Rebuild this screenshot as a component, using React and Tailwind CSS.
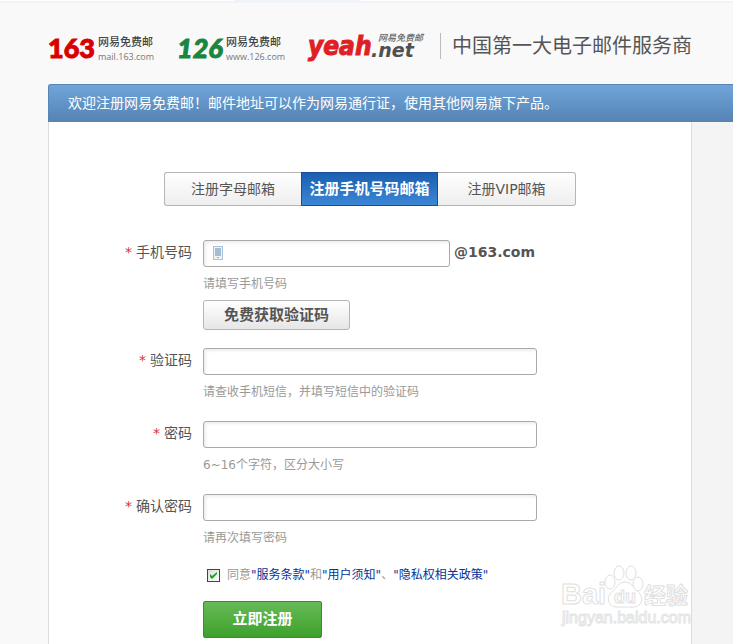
import { useState } from "react";

const TABS = [
  { id: "letter", label: "注册字母邮箱" },
  { id: "mobile", label: "注册手机号码邮箱" },
  { id: "vip", label: "注册VIP邮箱" },
];

const INPUT =
  "h-[27px] rounded-[3px] border border-[#a9a9a9] bg-white px-2 text-sm shadow-[inset_2px_2px_3px_#eeeeee] outline-none";

function Field({ id, label, hint, children }) {
  return (
    <div className="flex gap-[11px]">
      <label htmlFor={id} className="w-[143px] text-right text-sm leading-6">
        <span className="mr-1 text-[#d9333a]">*</span>
        {label}
      </label>
      <div>
        {children}
        <p className="mt-2 text-xs leading-[18px] text-[#999999]">{hint}</p>
      </div>
    </div>
  );
}

function PhoneIcon() {
  return (
    <svg viewBox="0 0 10 14" className="absolute top-[6px] left-[10px] h-[14px] w-[10px]">
      <rect x="0.5" y="0.5" width="9" height="13" fill="#f1f1f1" stroke="#a9c4dc" />
      <rect x="2" y="2" width="6" height="8" fill="#a3bdd6" />
      <rect x="4" y="11" width="2" height="1" fill="#a3a9ae" />
    </svg>
  );
}

function Watermark() {
  return (
    <svg
      viewBox="-3 0 134 72"
      className="pointer-events-none absolute right-0 bottom-3 h-[72px] w-[134px]"
      fill="#ffffff"
      stroke="#dfdfdf"
      aria-hidden="true"
    >
      <g fontFamily="Liberation Sans, sans-serif">
        <text x="1" y="44" fontSize="29" fontWeight="700">Bai</text>
        <text x="84" y="43" fontSize="22" fontWeight="700" fontFamily="Noto Sans CJK SC, sans-serif">经验</text>
        <text x="2" y="63" fontSize="16" stroke="#e4e4e4">jingyan.baidu.com</text>
      </g>
      <ellipse cx="50" cy="22" rx="5" ry="7" />
      <ellipse cx="59" cy="13" rx="5" ry="7" />
      <ellipse cx="71" cy="13" rx="5" ry="7" />
      <ellipse cx="78" cy="24" rx="5" ry="7" />
      <path d="M65 22c6 0 8 5 12 9 5 4 6 9 3 13-3 4-8 3-15 3s-12 1-15-3c-3-4-2-9 3-13 4-4 6-9 12-9z" />
      <text x="54" y="43" fontSize="18" fontWeight="700" fontFamily="Liberation Sans, sans-serif">du</text>
    </svg>
  );
}

function Caption({ site }) {
  return (
    <span className="pt-[2px] text-[11px] leading-4 font-medium text-[#444444]">
      <span className="block">网易免费邮</span>
      <span className="block font-['Open_Sans'] text-[9px] leading-3 text-[#777777]">{site}</span>
    </span>
  );
}

function Header() {
  return (
    <header className="flex h-[83px] border-t-2 border-[#f0f4f8] pt-[30px] pl-12 whitespace-nowrap">
      <a href="#163" className="flex w-[129px] gap-[3px]">
        <span className="w-[47px] font-['Lato'] text-[27px] leading-[30px] font-black text-[#d90000] [-webkit-text-stroke:1px_#d90000]">
          163
        </span>
        <Caption site="mail.163.com" />
      </a>
      <a href="#126" className="flex w-[131px] gap-[2px]">
        <span className="w-[47px] font-['Lato'] text-[27px] leading-[30px] font-black text-[#188642] italic [-webkit-text-stroke:1px_#188642]">
          126
        </span>
        <Caption site="www.126.com" />
      </a>
      <a href="#yeah" className="relative flex w-[132px] italic">
        <span className="w-[63px] font-['DejaVu_Sans_Condensed','DejaVu_Sans'] text-[26px] leading-[26px] font-bold text-[#df1f26] [-webkit-text-stroke:1px_#df1f26]">
          yeah
        </span>
        <span className="pt-1 text-[19px] leading-[26px] font-bold text-[#505050]">.net</span>
        <span className="absolute top-0 left-[70px] text-[9px] leading-[10px] font-medium text-[#666666]">网易免费邮</span>
      </a>
      <p className="h-[26px] border-l border-[#bbbbbb] pl-[11px] text-xl leading-[26px] text-[#555555]">
        中国第一大电子邮件服务商
      </p>
    </header>
  );
}

export default function App() {
  const [tab, setTab] = useState("mobile");
  const [agreed, setAgreed] = useState(true);

  return (
    <div className="flex min-h-screen flex-col overflow-x-hidden bg-[#f9f9f9] font-['DejaVu_Sans','Noto_Sans_CJK_SC',sans-serif] text-[#555555]">
      <div className="h-px bg-white pl-[234px]">
        <div className="h-px w-[126px] bg-[#f0f4f8]" />
      </div>
      <Header />
      <h1 className="ml-12 h-[38px] rounded-tl-[3px] border border-r-0 border-[#5685b6] bg-linear-to-b from-[#71a5da] to-[#5584b5] pl-[19px] text-sm leading-[36px] whitespace-nowrap text-white">
        欢迎注册网易免费邮！邮件地址可以作为网易通行证，使用其他网易旗下产品。
      </h1>

      <div className="flex grow">
        <main className="relative ml-12 grow border-x border-[#dddddd] bg-white pt-[50px] pb-[6px]">
          <div className="ml-[115px] grid h-[34px] w-[412px] grid-cols-[137px_137px_138px]" role="tablist">
            {TABS.map(({ id, label }) => (
              <button
                key={id}
                type="button"
                role="tab"
                aria-selected={tab === id}
                onClick={() => setTab(id)}
                className={`border-y whitespace-nowrap first:rounded-l-[3px] first:border-l last:rounded-r-[3px] last:border-r ${
                  tab === id
                    ? "border-x border-[#164f99] bg-linear-to-b from-[#1a5fb0] to-[#3c86d6] text-[15px] font-bold text-white"
                    : "border-[#b5b5b5] bg-linear-to-b from-white to-[#eeeeee] text-sm"
                }`}
              >
                {label}
              </button>
            ))}
          </div>

          <form className="mt-[34px]" onSubmit={(e) => e.preventDefault()}>
            <Field id="phone" label="手机号码" hint="请填写手机号码">
              <div className="relative flex items-start gap-1">
                <input id="phone" type="tel" className={`${INPUT} w-[247px] pl-7`} />
                <PhoneIcon />
                <span className="text-sm leading-6 font-bold">@163.com</span>
              </div>
            </Field>
            <button
              type="button"
              className="mt-[7px] ml-[154px] block h-[30px] w-[147px] rounded-[3px] border border-[#b5b5b5] bg-linear-to-b from-white to-[#e6e6e6] text-[15px] leading-7 font-bold"
            >
              免费获取验证码
            </button>
            <div className="mt-[18px] flex flex-col gap-5">
              <Field id="code" label="验证码" hint="请查收手机短信，并填写短信中的验证码">
                <input id="code" type="text" className={`${INPUT} block w-[334px]`} />
              </Field>
              <Field id="password" label="密码" hint="6~16个字符，区分大小写">
                <input id="password" type="password" className={`${INPUT} block w-[334px]`} />
              </Field>
              <Field id="confirm" label="确认密码" hint="请再次填写密码">
                <input id="confirm" type="password" className={`${INPUT} block w-[334px]`} />
              </Field>
            </div>

            <div className="mt-[18px] ml-[158px] flex items-center gap-[7px] text-xs leading-5 text-[#999999]">
              <span className="relative flex">
                <input
                  id="agree"
                  type="checkbox"
                  checked={agreed}
                  onChange={(e) => setAgreed(e.target.checked)}
                  className="peer size-[13px] appearance-none border border-[#1c4c82] bg-linear-to-br from-[#dddddd] to-white"
                />
                <svg viewBox="0 0 13 13" className="pointer-events-none absolute inset-0 hidden size-[13px] peer-checked:block">
                  <path d="M3 5v3l2 2 5-5V3L5 7z" fill="#21a121" />
                </svg>
              </span>
              <label htmlFor="agree">
                同意<a href="#terms" className="text-[#003399]">"服务条款"</a>
                和<a href="#notice" className="text-[#003399]">"用户须知"</a>
                、<a href="#privacy" className="text-[#003399]">"隐私权相关政策"</a>
              </label>
            </div>

            <button
              type="submit"
              className="mt-4 ml-[154px] block h-[37px] w-[119px] rounded-[2px] border border-[#37902a] bg-linear-to-b from-[#66ba56] to-[#3da12b] text-[15px] font-bold text-white"
            >
              立即注册
            </button>
          </form>
          <Watermark />
        </main>
        <aside className="w-[41px] shrink-0 bg-[#f4f4f4]" />
      </div>
    </div>
  );
}
